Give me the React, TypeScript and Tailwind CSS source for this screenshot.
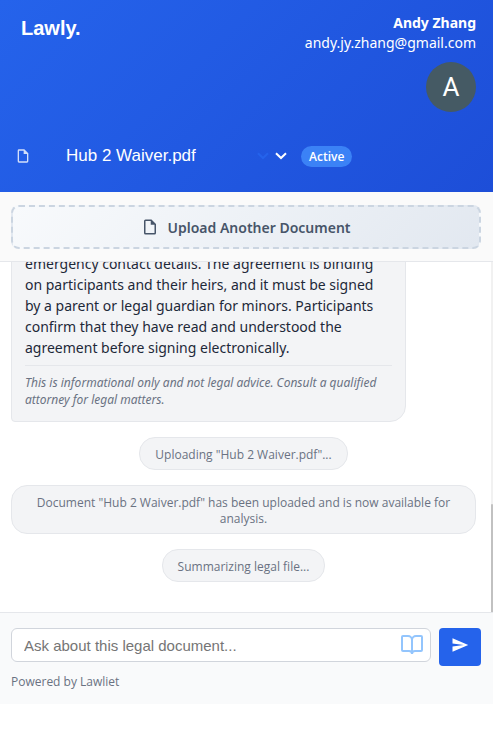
const sans = "font-['Noto_Sans','Open_Sans',sans-serif]";
const openSans = "font-['Open_Sans','Noto_Sans',sans-serif]";
const arial = "font-['Liberation_Sans',Arial,sans-serif]";

function FileIcon({ className }: { className: string }) {
  return (
    <svg viewBox="0 0 24 24" fill="currentColor" className={className} aria-hidden="true">
      <path d="M14 2H6a2 2 0 0 0-2 2v16a2 2 0 0 0 2 2h12a2 2 0 0 0 2-2V8l-6-6zM6 20V4h7v5h5v11H6z" />
    </svg>
  );
}

function Chevron({ className }: { className: string }) {
  return (
    <svg viewBox="0 0 12 8" fill="none" stroke="currentColor" strokeWidth="2" className={className} aria-hidden="true">
      <path d="M1 1.2 6 6l5-4.8" />
    </svg>
  );
}

function Notice({ children }: { children: React.ReactNode }) {
  return (
    <p
      className={`self-center rounded-2xl border border-gray-200 bg-gray-100 px-[15px] pt-[9px] pb-[6px] text-center text-[12px] leading-4 text-gray-500 ${openSans}`}
    >
      {children}
    </p>
  );
}

export default function App() {
  return (
    <div className={`flex h-screen flex-col bg-white pb-[42px] ${sans}`}>
      <header className="shrink-0 bg-[linear-gradient(135deg,#2563eb,#1d4ed8)] text-white">
        <div className="flex justify-between pt-[13px] pr-[17px] pl-[21px]">
          <h1 className={`pt-[3px] text-[20px] leading-6 font-bold ${arial}`}>Lawly.</h1>
          <div className="flex flex-col items-end text-right text-[14px] leading-5">
            <strong>Andy Zhang</strong>
            <span>andy.jy.zhang@gmail.com</span>
            <span className="mt-[9px] flex size-[50px] items-center justify-center rounded-full bg-[#455a64] font-['Roboto',sans-serif] text-[26px]">
              A
            </span>
          </div>
        </div>
        <div className="flex items-center pt-8 pb-6 pl-[15px]">
          <FileIcon className="size-4 text-white/80" />
          <div className="relative ml-[35px] w-[221px]">
            <select
              aria-label="Document"
              className={`block h-6 w-full appearance-none bg-transparent text-[17px] leading-5 text-white outline-none ${arial}`}
            >
              <option>Hub 2 Waiver.pdf</option>
            </select>
            <div className="pointer-events-none absolute inset-y-0 right-0 flex items-center gap-[6px]">
              <Chevron className="h-2 w-3 text-[#2563eb]" />
              <Chevron className="h-2 w-3" />
            </div>
          </div>
          <span
            className={`ml-[14px] rounded-full bg-[#3b82f6] px-2 text-[12px] leading-[21px] font-semibold ${openSans}`}
          >
            Active
          </span>
        </div>
      </header>

      <div className="shrink-0 border-b border-gray-200 bg-[#fafafa] pt-[13px] pr-3 pb-3 pl-[11px]">
        <button
          type="button"
          className="flex h-11 w-full items-center justify-center gap-2 rounded-lg border-2 border-dashed border-[#cbd5e1] bg-[linear-gradient(135deg,#f8fafc,#e2e8f0)] text-[14px] font-semibold text-[#475569]"
        >
          <FileIcon className="size-[18px]" />
          Upload Another Document
        </button>
      </div>

      <main className="flex min-h-0 flex-1">
        <div className="flex min-w-0 flex-1 flex-col justify-end gap-[15px] overflow-hidden pr-[15px] pb-[30px] pl-[11px]">
          <article className="w-[85%] shrink-0 rounded-2xl rounded-bl border border-gray-200 bg-gray-100 p-[13px]">
            <p className="text-[14px] leading-[21px] text-gray-800">
              emergency contact details. The agreement is binding on participants and their heirs, and it must be signed
              by a parent or legal guardian for minors. Participants confirm that they have read and understood the
              agreement before signing electronically.
            </p>
            <p className="mt-[7px] border-t border-gray-200 pt-2 text-[12px] leading-[17px] text-gray-500 italic">
              This is informational only and not legal advice. Consult a qualified attorney for legal matters.
            </p>
          </article>
          <Notice>Uploading "Hub 2 Waiver.pdf"...</Notice>
          <Notice>Document "Hub 2 Waiver.pdf" has been uploaded and is now available for analysis.</Notice>
          <Notice>Summarizing legal file...</Notice>
        </div>
        <div className="flex w-[2px] flex-col justify-end bg-[#f1f1f1]">
          <div className="h-[31%] rounded-t-sm bg-[#c1c1c1]" />
        </div>
      </main>

      <footer className="shrink-0 border-t border-gray-200 bg-gray-50 px-[11px] pt-[15px] pb-[13px]">
        <form className="flex items-start gap-2 pr-px" onSubmit={(e) => e.preventDefault()}>
          <div className="relative flex-1">
            <input
              type="text"
              aria-label="Ask about this legal document"
              placeholder="Ask about this legal document..."
              className={`block h-[34px] w-full rounded-md border border-gray-300 bg-white pr-9 pl-3 text-[15px] text-gray-800 placeholder:text-[#757575] ${arial}`}
            />
            <button type="button" aria-label="Open library" className="absolute top-[5px] right-[7px] text-[#93c5fd]">
              <svg viewBox="0 0 24 24" fill="none" stroke="currentColor" strokeWidth="2" className="size-6">
                <path d="M12 7v14" />
                <path d="M3 18a1 1 0 0 1-1-1V4a1 1 0 0 1 1-1h5a4 4 0 0 1 4 4 4 4 0 0 1 4-4h5a1 1 0 0 1 1 1v13a1 1 0 0 1-1 1h-6a3 3 0 0 0-3 3 3 3 0 0 0-3-3z" />
              </svg>
            </button>
          </div>
          <button
            type="submit"
            aria-label="Send"
            className="flex h-[38px] w-[42px] items-center justify-center rounded bg-[#2563eb] pb-1 text-white"
          >
            <svg viewBox="0 0 24 24" fill="currentColor" className="size-[18px]">
              <path d="M2 21l21-9L2 3v7l15 2-15 2z" />
            </svg>
          </button>
        </form>
        <p className={`mt-[7px] text-[12px] leading-[18px] text-gray-500 ${openSans}`}>Powered by Lawliet</p>
      </footer>
    </div>
  );
}
